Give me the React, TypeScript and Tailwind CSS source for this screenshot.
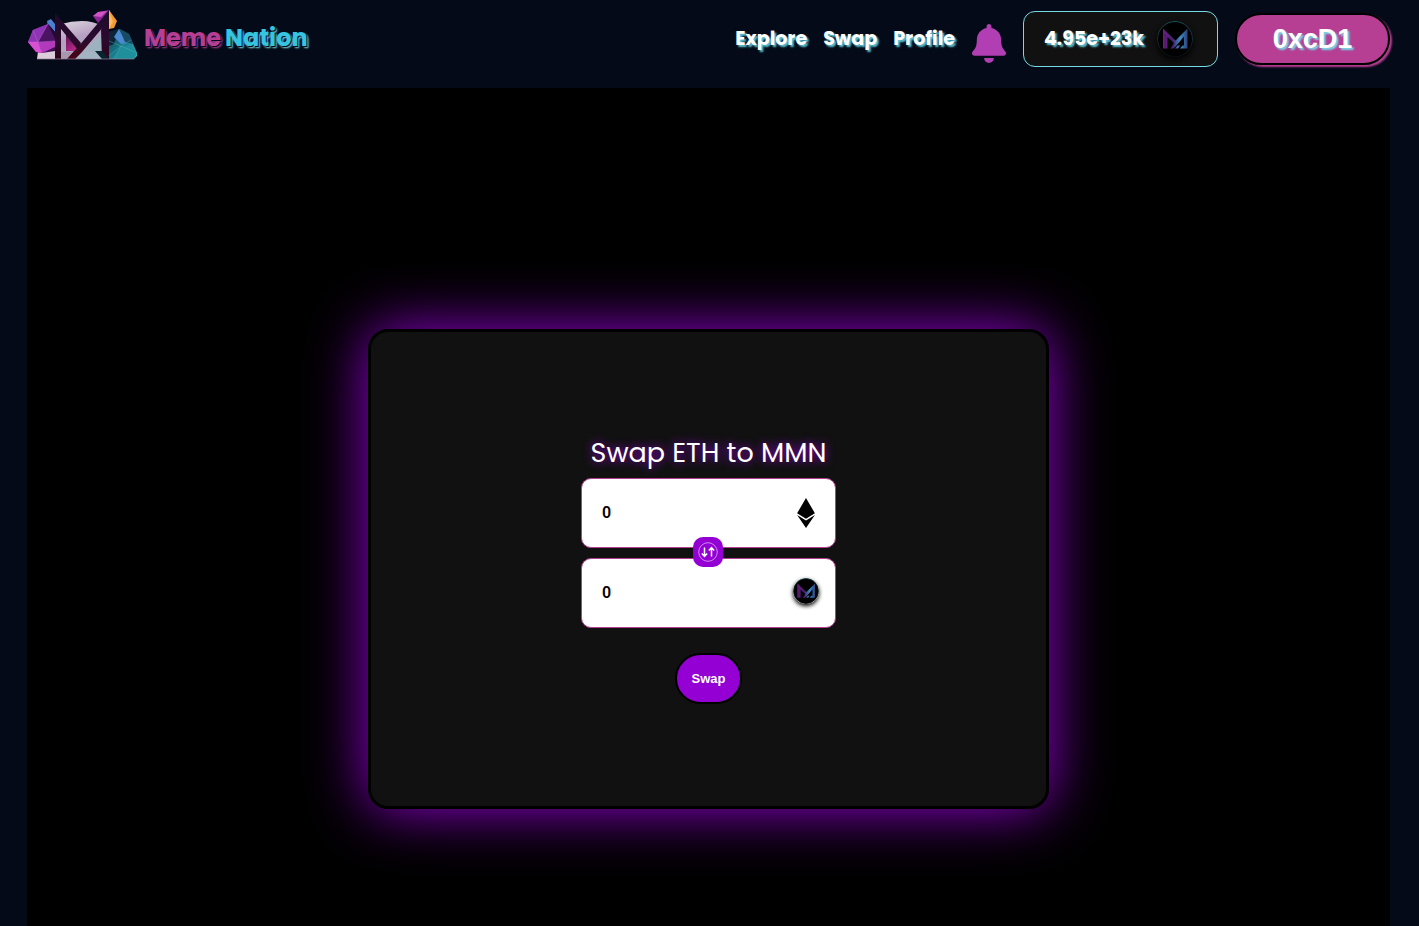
import { useState } from "react";
import { FaBell, FaEthereum } from "react-icons/fa";

function Logo() {
  return (
    <svg viewBox="0 0 110 50" className="h-[50px] w-[110px]" aria-hidden="true">
      <defs>
        <linearGradient id="gemLeft" x1="0" y1="0" x2="1" y2="1">
          <stop offset="0" stopColor="#b44be0" />
          <stop offset="0.5" stopColor="#8a1f9e" />
          <stop offset="1" stopColor="#2c0a3c" />
        </linearGradient>
        <linearGradient id="dome" x1="0" y1="0" x2="0.3" y2="1">
          <stop offset="0" stopColor="#dcd6df" />
          <stop offset="0.5" stopColor="#b79fc0" />
          <stop offset="1" stopColor="#a3b4c2" />
        </linearGradient>
        <linearGradient id="leg" x1="0" y1="0" x2="0" y2="1">
          <stop offset="0" stopColor="#1f0a2a" />
          <stop offset="0.6" stopColor="#2b0a2e" />
          <stop offset="1" stopColor="#2c0518" />
        </linearGradient>
        <linearGradient id="diagonal" x1="0" y1="0" x2="0" y2="1">
          <stop offset="0" stopColor="#1c0b29" />
          <stop offset="0.6" stopColor="#2a0b30" />
          <stop offset="1" stopColor="#4a0414" />
        </linearGradient>
        <linearGradient id="gemRight" x1="0" y1="0" x2="1" y2="1">
          <stop offset="0" stopColor="#12303f" />
          <stop offset="0.5" stopColor="#17707f" />
          <stop offset="1" stopColor="#35c1cc" />
        </linearGradient>
        <linearGradient id="pane" x1="0" y1="0" x2="0.6" y2="1">
          <stop offset="0" stopColor="#4e1049" />
          <stop offset="1" stopColor="#c02a8e" />
        </linearGradient>
      </defs>
      <path d="M9 49 11 34 27 40v9z" fill="#ddccda" />
      <path d="M33 49V14Q43 11 54 11T74 16v33z" fill="url(#dome)" />
      <path d="M19 11 23 9 27 14v10L20 17z" fill="#4c7fd0" />
      <path d="M5 20 20 14 27 22v19L14 43 8 42 0 32z" fill="url(#gemLeft)" />
      <path d="M5 20 20 14 10 32 0 32z" fill="#8f35b4" />
      <path d="M0 32 10 32 14 43 8 42z" fill="#d94fd2" />
      <path d="M10 32 27 31v6L14 43z" fill="#b03abb" />
      <path d="M20 14 27 22v9L10 32z" fill="#4a1463" />
      <path d="M20 14 27 22v7z" fill="#220a33" />
      <path d="M5 20 10 32 27 31M10 32 20 14M10 32 14 43M0 32 10 32" stroke="#c868dc" strokeWidth="0.4" fill="none" />
      <path d="M65 6 70 2 81 0 79 14 73 17z" fill="#8d2499" />
      <path d="M65 6 70 2 79 1 73 7z" fill="#cf55c4" />
      <path d="M73 17 71 12 79 4v13z" fill="#4c1168" />
      <path d="M81 0 89 11 86 18 81 19z" fill="#f39a36" />
      <path d="M81 0 85 12 81 19z" fill="#ffbc52" />
      <path d="M81 22 92 19 101 24 109 43 109 46 106 49H76z" fill="url(#gemRight)" />
      <path d="M81 22 91 19 86 34 81 36z" fill="#0e2438" />
      <path d="M91 19 98 33 93 34 86 27z" fill="#4b8ad2" />
      <path d="M92 20 101 24 105 34 97 32z" fill="#174a63" />
      <path d="M93 36 105 37 109 43 106 49H86z" fill="#1f8f9c" />
      <path d="M81 46 93 36 103 30M93 36 109 43M93 36 86 49M81 31 93 36" stroke="#4fb8c2" strokeWidth="0.4" fill="none" />
      <path d="M38 22 53 37 46 41H38z" fill="url(#pane)" />
      <path d="M55 43 74 24v17H59z" fill="#9db2bf" />
      <path d="M73 20 81 0v49h-7z" fill="url(#leg)" />
      <path d="M81 0V10L54 42 47 49H38l12-12z" fill="url(#diagonal)" />
      <path d="M27 3 53 33 50 40 33 19v30h-6z" fill="url(#leg)" />
      <path d="M33 42H45L39 49H33z" fill="#a898ad" />
      <path d="M67 41h7l7 8h-7z" fill="#07242f" />
      <path d="M9 49h97" stroke="#94809b" strokeWidth="0.7" />
    </svg>
  );
}

function Coin({ className }: { className: string }) {
  return (
    <svg viewBox="0 0 36 36" className={className} role="img" aria-label="MMN">
      <defs>
        <linearGradient id="coinMark" x1="6" y1="20" x2="31" y2="20" gradientUnits="userSpaceOnUse">
          <stop offset="0" stopColor="#6b1f80" />
          <stop offset="0.4" stopColor="#43206f" />
          <stop offset="0.68" stopColor="#3b8fc4" />
          <stop offset="1" stopColor="#2d3a78" />
        </linearGradient>
        <linearGradient id="coinRim" x1="0" y1="0" x2="0" y2="1">
          <stop offset="0" stopColor="#1d5560" />
          <stop offset="1" stopColor="#050b0d" />
        </linearGradient>
      </defs>
      <circle cx="18" cy="18" r="17.5" fill="#000" stroke="url(#coinRim)" />
      <path
        d="M6 7.500 18.500 19.500 30.500 7.500V27.500H23L25.500 24.500H27V15.500L18.500 25.500 16.500 27.500H13.500L17 22 10.500 16V27.500H6zM18 27.500 20.500 24.500H23L21 27.500z"
        fill="url(#coinMark)"
      />
      <path d="M8.200 13V27.500" stroke="#000" strokeWidth="0.500" opacity="0.500" />
    </svg>
  );
}

function SwapArrows() {
  return (
    <svg viewBox="0 0 20 20" className="size-5" fill="none" stroke="#fff" aria-hidden="true">
      <circle cx="10" cy="10" r="9.300" strokeWidth="0.800" opacity="0.700" />
      <path d="M6.500 5.500v8.500M3.800 11.400 6.500 14.300l2.700-2.900M13.500 14.500V6M10.800 8.600l2.700-2.900 2.700 2.900" strokeWidth="1.500" />
    </svg>
  );
}

const navLinks = ["Explore", "Swap", "Profile"];

export default function App() {
  const [eth, setEth] = useState("0");
  const [mmn, setMmn] = useState("0");
  const field =
    "block h-[70px] w-full rounded-[10px] border border-[#b63e93] bg-white pb-0.5 pl-5 pr-14 font-['Roboto',sans-serif] text-base font-semibold text-black outline-none";

  return (
    <div className="flex min-h-screen flex-col bg-[#040a17] pr-[29px] pl-[27px] font-['Poppins','Inter',sans-serif] text-white">
      <header className="flex h-[88px] items-start justify-between">
        <a href="#" className="flex items-center gap-1.5 pt-2.5 pl-px">
          <Logo />
          <span className="flex gap-1 pt-1.5 text-2xl font-bold">
            <span className="text-[#b63e93] [text-shadow:1px_1px_0_#040a17,2px_2px_2px_#b63e93]">Meme</span>
            <span className="text-[#36c5e0] [text-shadow:1px_1px_0_#040a17,2px_2px_2px_#7fdbe6]">Nation</span>
          </span>
        </a>
        <div className="flex h-[78px] items-center gap-[17px]">
          <nav className="flex gap-4 text-[19px] font-bold [text-shadow:2px_2px_2px_#5fcbdc]">
            {navLinks.map((label) => (
              <a key={label} href="#">
                {label}
              </a>
            ))}
          </nav>
          <button type="button" aria-label="Notifications" className="pt-2 text-[#b23eb3]">
            <FaBell className="h-[39px] w-[34px]" />
          </button>
          <div className="flex h-14 w-[195px] items-center justify-between rounded-xl border border-[#77dbe6] bg-[#111] pr-6 pl-5">
            <span className="text-[19px] font-bold [text-shadow:2px_2px_2px_#5fcbdc]">4.95e+23k</span>
            <Coin className="size-9 rounded-full shadow-[0_3px_6px_#000]" />
          </div>
          <button
            type="button"
            className="h-[52px] w-[155px] rounded-full border-2 border-black bg-[#b63e93] font-['Liberation_Sans',sans-serif] text-[27px] font-bold shadow-[2px_2px_2px_#b63e93] [text-shadow:2px_2px_2px_#77dbe6]"
          >
            0xcD1
          </button>
        </div>
      </header>

      <main className="flex flex-1 flex-col items-center bg-black pt-[241px]">
        <section className="flex h-[480px] w-1/2 flex-col items-center justify-center rounded-[20px] border-3 border-black bg-[#111] pb-0.5 shadow-[0_0_60px_#9400d3]">
          <h1 className="mb-1 text-[27px] leading-[42px] [text-shadow:0_0_10px_#9400d3]">Swap ETH to MMN</h1>
          <form className="flex w-[255px] flex-col items-center" onSubmit={(e) => e.preventDefault()}>
            <div className="relative flex w-full flex-col gap-2.5">
              <label className="relative block">
                <input aria-label="ETH amount" className={field} value={eth} onChange={(e) => setEth(e.target.value)} />
                <FaEthereum className="absolute top-5 right-5 h-[30px] w-5 text-black" />
              </label>
              <label className="relative block">
                <input aria-label="MMN amount" className={field} value={mmn} onChange={(e) => setMmn(e.target.value)} />
                <Coin className="absolute top-5 right-[17px] size-[26px] rounded-full shadow-[0_2px_4px_#000]" />
              </label>
              <button
                type="button"
                aria-label="Switch direction"
                className="absolute top-1/2 left-1/2 -mt-4 -ml-4 flex size-[30px] items-center justify-center rounded-[10px] bg-[#9400d3]"
              >
                <SwapArrows />
              </button>
            </div>
            <button
              type="submit"
              className="mt-[25px] h-[51px] w-[67px] rounded-full border-2 border-black bg-[#9400d3] font-['Liberation_Sans',sans-serif] text-[13px] font-bold"
            >
              Swap
            </button>
          </form>
        </section>
      </main>
    </div>
  );
}
